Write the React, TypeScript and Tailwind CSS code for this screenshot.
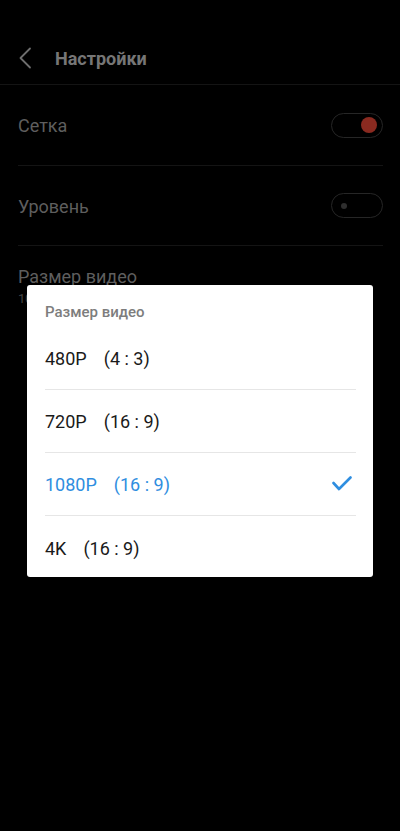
import React from "react";

const font = { fontFamily: "Roboto, 'Noto Sans', sans-serif" };

function Toggle({ on }: { on: boolean }) {
  return (
    <div className="relative w-[52px] h-[25px] rounded-full border-[1.5px] border-[#262626] flex items-center">
      {on ? (
        <div className="absolute right-[5px] w-[16px] h-[16px] rounded-full bg-[#8a2a20]" />
      ) : (
        <div className="absolute left-[9px] w-[6px] h-[6px] rounded-full bg-[#2e2e2e]" />
      )}
    </div>
  );
}

const options = [
  { a: "480P", b: "(4 : 3)" },
  { a: "720P", b: "(16 : 9)" },
  { a: "1080P", b: "(16 : 9)", selected: true },
  { a: "4K", b: "(16 : 9)" },
];

export default function App() {
  return (
    <div className="relative w-[400px] h-[831px] bg-black overflow-hidden" style={font}>
      {/* Header */}
      <div className="pt-[32px] border-b border-[#141414]">
        <div className="h-[52px] flex items-center pl-[18px]">
          <svg width="14" height="22" viewBox="0 0 14 22" className="mr-[23px]">
            <polyline points="12,1.5 2.5,11 12,20.5" fill="none" stroke="#6e6e6e" strokeWidth="1.8" strokeLinecap="round" strokeLinejoin="round" />
          </svg>
          <span className="text-[18px] font-bold text-[#767676]">Настройки</span>
        </div>
      </div>

      <div className="pl-[18px] pr-[17px]">
        <div className="h-[81px] flex items-center justify-between border-b border-[#141414]">
          <span className="text-[18px] text-[#5e5e5e] mt-[1px]">Сетка</span>
          <Toggle on={true} />
        </div>
        <div className="h-[80px] flex items-center justify-between border-b border-[#141414]">
          <span className="text-[18px] text-[#5e5e5e] mt-[1px]">Уровень</span>
          <Toggle on={false} />
        </div>
        <div className="pt-[19px] flex flex-col">
          <span className="text-[18px] leading-[24px] text-[#5e5e5e]">Размер видео</span>
          <span className="text-[13px] leading-[18px] text-[#444444] mt-[1px]">1080P (16 : 9)</span>
        </div>
      </div>

      {/* Dialog */}
      <div className="absolute left-[27px] top-[285px] w-[346px] h-[292px] bg-white rounded-[3px]">
        <div className="h-[42px] pt-[17px] px-[18px]">
          <div className="text-[15px] leading-[20px] font-medium text-[#7d7d7d]">Размер видео</div>
        </div>
        <div className="pl-[18px] pr-[17px]">
          {options.map((o, i) => (
            <div
              key={o.a}
              className={
                "h-[63px] flex items-center justify-between " +
                (i < options.length - 1 ? "border-b border-[#e6e6e6]" : "")
              }
            >
              <div
                className={
                  "flex items-center gap-[17px] text-[18px] pt-[1px] " +
                  (o.selected ? "text-[#2f8ee0]" : "text-[#1a1a1a]")
                }
              >
                <span>{o.a}</span>
                <span>{o.b}</span>
              </div>
              {o.selected && (
                <svg width="20" height="16" viewBox="0 0 20 16" className="mr-[4px]">
                  <polyline points="1.5,7 7,13 18.5,1.5" fill="none" stroke="#2f8ee0" strokeWidth="2.6" strokeLinecap="round" strokeLinejoin="round" />
                </svg>
              )}
            </div>
          ))}
        </div>
      </div>
    </div>
  );
}
